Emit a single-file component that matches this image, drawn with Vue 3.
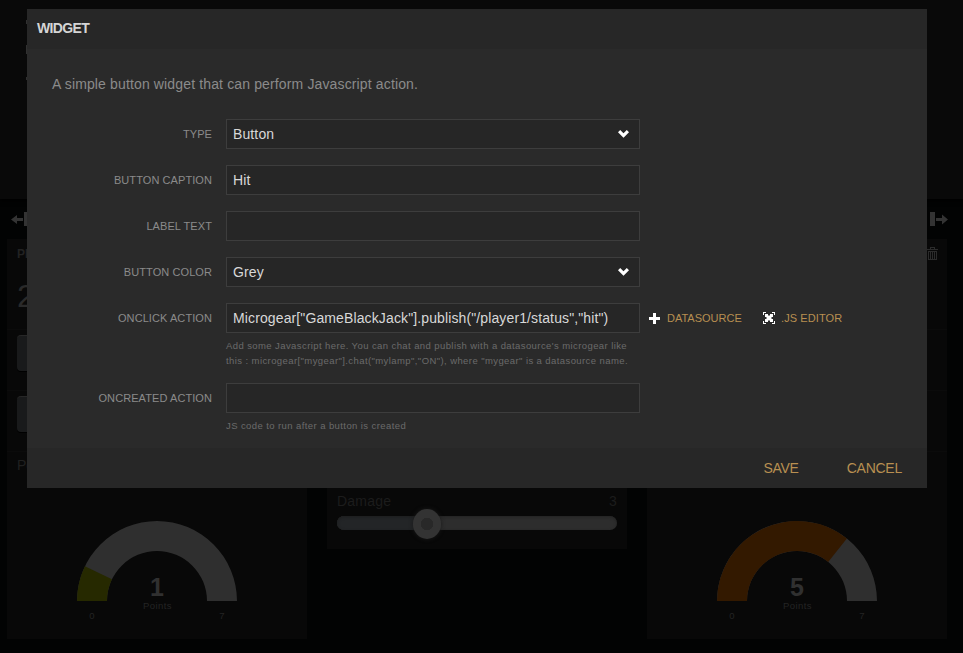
<script setup>
const hidden = 'Player'
const fields = [
  { label: 'TYPE', value: 'Button', select: true },
  { label: 'BUTTON CAPTION', value: 'Hit' },
  { label: 'LABEL TEXT', value: '' },
  { label: 'BUTTON COLOR', value: 'Grey', select: true },
  {
    label: 'ONCLICK ACTION',
    value: 'Microgear["GameBlackJack"].publish("/player1/status","hit")',
    tools: true,
    hint: ["Add some Javascript here. You can chat and publish with a datasource's microgear like", 'this : microgear["mygear"].chat("mylamp","ON"), where "mygear" is a datasource name.']
  },
  { label: 'ONCREATED ACTION', value: '', hint: ['JS code to run after a button is created'] }
]

function arc(from, to) {
  const point = (r, t) => {
    const a = Math.PI * (1 - t)
    return `${(80 + r * Math.cos(a)).toFixed(2)} ${(80 - r * Math.sin(a)).toFixed(2)}`
  }
  return `M${point(80, from)}A80 80 0 0 1 ${point(80, to)}L${point(50, to)}A50 50 0 0 0 ${point(50, from)}Z`
}

const gauges = [
  { side: 'left', value: 1, color: '#262900', title: hidden },
  { side: 'right', value: 5, color: '#331900', title: hidden }
]
</script>

<template>
  <div class="page">
    <header class="topbar">
      <i class="peek"></i><i class="peek tall"></i><i class="peek small"></i>
    </header>
    <main class="board">
      <div class="column-tools">
        <svg width="20" height="14" viewBox="0 0 20 14"><path d="M0 7.500 6 3v3h6v3H6v3zM13 0h5v14h-5z" /></svg>
        <svg width="20" height="14" viewBox="0 0 20 14"><path d="M1 0h5v14H1zM7 6h6V2.500l6 5-6 5V9H7z" /></svg>
      </div>
      <div class="panes">
        <section v-for="g in gauges" :key="g.side" class="pane" :class="g.side">
          <div class="pane-head">
            <b>{{ g.title }}</b>
            <svg v-if="g.side === 'right'" width="12" height="13" viewBox="0 0 12 13" shape-rendering="crispEdges">
              <path d="M3 0h5v2h3v1H0V2h3zM4 1v1h3V1zM1 4h9v9H1zM2 5v7h1V5zM4 5v7h1V5zM6 5v7h1V5zM8 5v7h1V5z" fill-rule="evenodd" />
            </svg>
          </div>
          <div class="score">21</div>
          <div class="action"><span class="btn"></span></div>
          <div class="action"><span class="btn"></span></div>
          <div class="gauge-row">
            <div class="gauge-title">Points</div>
            <div class="gauge">
              <svg width="160" height="80" viewBox="0 0 160 80">
                <path :d="arc(0, 1)" fill="#2f2f2f" />
                <path :d="arc(0, g.value / 7)" :fill="g.color" />
              </svg>
              <div class="gauge-value">{{ g.value }}</div>
              <div class="gauge-unit">Points</div>
              <div class="gauge-range"><span>0</span><span>7</span></div>
            </div>
          </div>
        </section>
        <section class="pane middle">
          <div class="slider-label"><span>Damage</span><span>3</span></div>
          <div class="track"><div class="fill"></div><div class="knob"></div></div>
        </section>
      </div>
    </main>

    <div class="modal">
      <div class="modal-head">WIDGET</div>
      <div class="modal-body">
        <p class="description">A simple button widget that can perform Javascript action.</p>
        <div v-for="f in fields" :key="f.label" class="row">
          <label>{{ f.label }}</label>
          <div class="control">
            <div class="line">
              <div class="input">
                <span>{{ f.value }}</span>
                <svg v-if="f.select" class="chevron" width="11" height="8" viewBox="0 0 11 8"><path d="M2.200 0 5.500 3.200 8.800 0 11 2.200 5.500 7.800 0 2.200z" /></svg>
              </div>
              <div v-if="f.tools" class="tools">
                <svg width="11" height="11" viewBox="0 0 11 11" shape-rendering="crispEdges"><path d="M4 0h3v4h4v3H7v4H4V7H0V4h4z" /></svg>
                <span class="ds">DATASOURCE</span>
                <svg width="12" height="12" viewBox="0 0 12 12"><path d="M0 0h3v1H1v2H0zM9 0h3v3h-1V1H9zM0 9h1v2h2v1H0zM11 9h1v3H9v-1h2zM2 2h3v1l1 1 1-1V2h3v3H9L8 6l1 1h1v3H7V9L6 8 5 9v1H2V7h1l1-1-1-1H2z" /></svg>
                <span class="js">.JS EDITOR</span>
              </div>
            </div>
            <div v-if="f.hint" class="hint"><div v-for="h in f.hint" :key="h">{{ h }}</div></div>
          </div>
        </div>
      </div>
      <div class="modal-foot"><span>SAVE</span><span>CANCEL</span></div>
    </div>
  </div>
</template>

<style>
body { margin: 0; background: #020303; overflow: hidden; }
</style>

<style scoped>
* { box-sizing: border-box; }
svg { display: block; flex: none; }
.page { position: relative; width: 963px; height: 653px; overflow: hidden; background: #020303; font-family: "Liberation Sans", Arial, sans-serif; }
.topbar { height: 199px; background: #090909; box-shadow: 0 2px 4px #000; padding: 20px 0 0 26px; }
.peek { display: block; width: 2px; height: 4px; background: #303030; }
.peek.tall { height: 9px; margin-top: 21px; }
.peek.small { height: 3px; margin-top: 23px; }
.board { padding: 13px 16px 0 7px; }
.column-tools { height: 27px; display: flex; justify-content: space-between; padding: 0 0 0 4px; margin-right: -2px; }
.column-tools svg { fill: #333; }
.panes { display: grid; grid-template-columns: 300px 300px 300px; gap: 20px; align-items: start; }
.pane { background: #080808; }
.left { grid-column: 1; grid-row: 1; height: 400px; }
.right { grid-column: 3; grid-row: 1; height: 400px; }
.middle { grid-column: 2; grid-row: 1; height: 310px; padding: 254px 10px 0; }
.pane-head { height: 30px; display: flex; justify-content: space-between; padding: 8px 8px 0 10px; font-size: 12px; line-height: 14px; color: #222; text-transform: uppercase; }
.pane-head svg { fill: #2b2b2b; }
.score { height: 60px; padding: 8px 10px; font-size: 32px; line-height: 38px; color: #2a2a2a; }
.action { height: 61px; border-top: 1px solid #0b0b0b; padding: 5px 10px; }
.btn { display: block; width: 80px; height: 36px; border-radius: 4px; background: #191a1b; border-top: 1px solid #272727; box-shadow: 0 1px #000; }
.gauge-row { height: 188px; border-top: 1px solid #0b0b0b; }
.gauge-title { height: 69px; padding: 4px 10px; color: #202020; font-size: 14px; line-height: 18px; }
.gauge { width: 160px; margin: 0 auto; text-align: center; color: #242424; font-size: 9.500px; }
.gauge-value { margin-top: -28px; height: 28px; font-size: 25px; font-weight: bold; line-height: 28px; color: #303030; }
.gauge-unit { height: 10px; line-height: 10px; padding-left: 1px; letter-spacing: .4px; }
.gauge-range { display: flex; justify-content: space-between; line-height: 10px; }
.gauge-range span { width: 30px; }
.slider-label { display: flex; justify-content: space-between; color: #1c1c1c; font-size: 14px; line-height: 16px; letter-spacing: .2px; }
.track { position: relative; height: 14px; margin-top: 7px; border-radius: 7px; background: #2d2d2d; box-shadow: inset 0 1px 3px #222; }
.fill { width: 90px; height: 14px; border-radius: 7px 0 0 7px; background: #232527; box-shadow: inset 0 1px 3px #1c1d1e; }
.knob { position: absolute; left: 76px; top: -7px; width: 28px; height: 30px; border-radius: 50%; background: radial-gradient(circle, #282828 0 6px, #333 6.500px); box-shadow: 0 0 4px #1a1a1a; }

.modal { position: absolute; left: 27px; top: 9px; width: 900px; height: 479px; background: #2a2a2a; display: flex; flex-direction: column; }
.modal-head { flex: none; height: 40px; padding: 0 10px; background: #272727; color: #d5d5d5; font-size: 14px; font-weight: bold; line-height: 39px; letter-spacing: -.65px; }
.modal-body { flex: 1; min-height: 0; padding: 25px 25px 0; }
.description { margin: 0 0 25px; height: 20px; font-size: 14px; line-height: 20px; letter-spacing: .14px; color: #8b8b8b; }
.row { display: flex; margin-bottom: 16px; }
.row label { width: 160px; height: 30px; margin-right: 14px; text-align: right; line-height: 30px; font-size: 11px; letter-spacing: .08px; color: #8b8b8b; }
.line { display: flex; height: 30px; }
.input { width: 414px; height: 30px; border: 1px solid #3d3d3d; background: #262626; padding: 0 10px 0 6px; display: flex; justify-content: space-between; align-items: center; color: #d8d8d8; font-size: 14px; letter-spacing: .12px; white-space: nowrap; }
.chevron, .tools svg { fill: #fff; }
.tools { display: flex; align-items: center; margin-left: 9px; color: #b88f51; font-size: 11px; }
.ds { margin-left: 7px; width: 96px; }
.js { margin-left: 6px; letter-spacing: .1px; }
.hint { margin-top: 5px; margin-bottom: -1px; color: #6a6a6a; font-size: 9.500px; line-height: 15px; letter-spacing: .41px; white-space: nowrap; }
.modal-foot { flex: none; height: 40px; background: #272727; display: flex; justify-content: flex-end; gap: 48px; padding-right: 25px; line-height: 40px; color: #b88f51; font-size: 14px; letter-spacing: -.25px; }
</style>
